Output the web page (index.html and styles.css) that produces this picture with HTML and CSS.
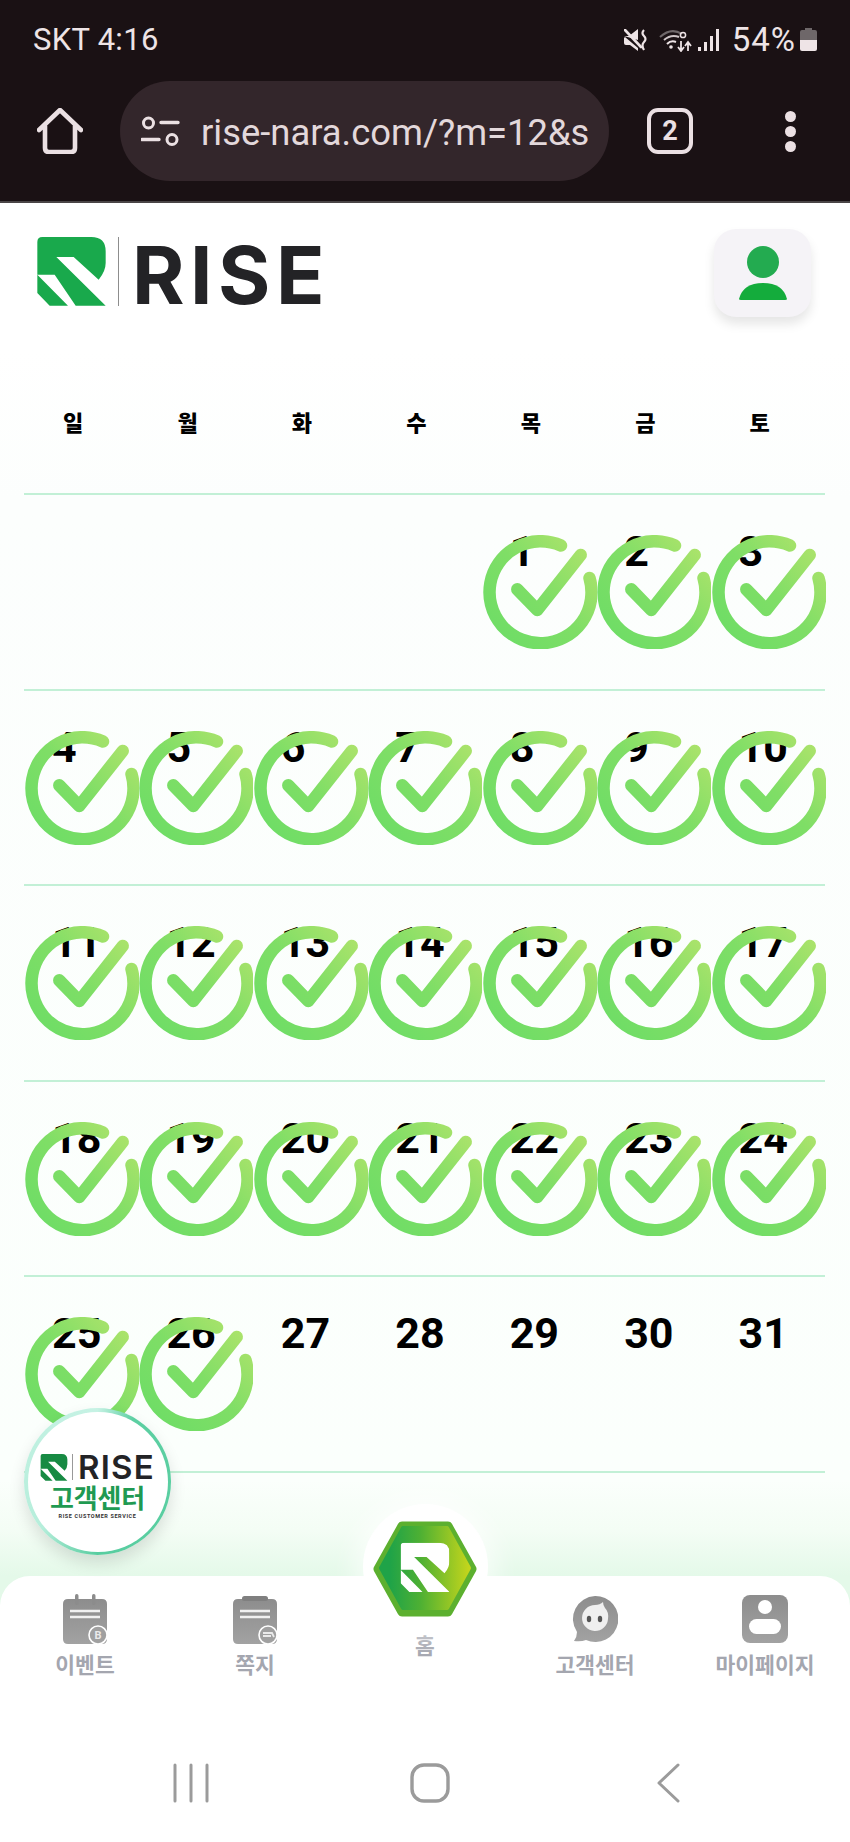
FILE: index.html
```html
<!DOCTYPE html>
<html lang="ko">
<head>
<meta charset="utf-8">
<title>RISE</title>
<link rel="stylesheet" href="styles.css">
</head>
<body>
<svg class="defs" width="0" height="0" aria-hidden="true">
  <defs>
    <linearGradient id="ringGrad" gradientUnits="userSpaceOnUse" x1="15" y1="100" x2="105" y2="15">
      <stop offset="0" stop-color="#6fdd66"/>
      <stop offset="0.5" stop-color="#7fde66"/>
      <stop offset="1" stop-color="#ace36b"/>
    </linearGradient>
    <linearGradient id="hexGrad" x1="0" y1="0" x2="1" y2="0">
      <stop offset="0.1" stop-color="#1fa348"/>
      <stop offset="0.45" stop-color="#4eb033"/>
      <stop offset="1" stop-color="#c3d51c"/>
    </linearGradient>
    <linearGradient id="grayGrad" x1="0" y1="0" x2="0" y2="1">
      <stop offset="0" stop-color="#8d8d8d"/>
      <stop offset="1" stop-color="#a2a2a2"/>
    </linearGradient>
    <symbol id="check" viewBox="0 0 114 114">
      <path d="M78 10.5 A51 51 0 1 0 106.5 43" fill="none" stroke="url(#ringGrad)" stroke-width="12.5" stroke-linecap="round"/>
      <path d="M34.3 54.3 L54.3 75 L97.7 20" fill="none" stroke="url(#ringGrad)" stroke-width="12.5" stroke-linecap="round" stroke-linejoin="round"/>
    </symbol>
    <symbol id="mark" viewBox="113 712 205 207">
      <path d="M113 727 Q113 712 128 712 H275 Q318 712 318 755 V790 Q318 815 297 840 L222 772 H170 L318 918 H228 L165 825 H113 Z M113 825 L205 918 H150 L113 880 Z"/>
    </symbol>
  </defs>
</svg>

<header class="chrome">
  <div class="status">
    <span class="status-time">SKT 4:16</span>
    <div class="status-right">
      <svg class="ic-mute" viewBox="0 0 25 22"><path d="M0 7 H5 L14 0 V11 Z M1 8 L14 19 V22 L6 16 H2 Q0 16 0 14 V9 Z" fill="#eee4e6"/><path d="M1 1 L17 18" stroke="#eee4e6" stroke-width="2.6" stroke-linecap="round"/><path d="M20 1 Q17 4 20 7 Q23 10 20 13 Q17 16 20 21" fill="none" stroke="#eee4e6" stroke-width="2.2"/></svg>
      <svg class="ic-wifi" viewBox="0 0 33 24"><path d="M1 9 Q12 -1 23 6" fill="none" stroke="#6f686a" stroke-width="2"/><path d="M5 12 Q12 6 20 9" fill="none" stroke="#cfc6c8" stroke-width="2"/><path d="M8 16 Q12 12 17 14" fill="none" stroke="#eee4e6" stroke-width="2"/><circle cx="12" cy="19" r="1.8" fill="#eee4e6"/><circle cx="24" cy="7" r="2.6" fill="none" stroke="#eee4e6" stroke-width="1.5"/><path d="M22 13 V22 M19 19 L22 23 L25 19 M29 23 V15 M26 18 L29 14 L32 18" fill="none" stroke="#eee4e6" stroke-width="1.8"/></svg>
      <svg class="ic-signal" viewBox="0 0 22 24"><rect x="0" y="19" width="3" height="4" fill="#eee4e6"/><rect x="6" y="14" width="3" height="9" fill="#eee4e6"/><rect x="12" y="8" width="3" height="15" fill="#eee4e6"/><rect x="18" y="1" width="3" height="22" fill="#eee4e6"/></svg>
      <span class="status-batt">54%</span>
      <svg class="ic-batt" viewBox="0 0 17 24"><path d="M5 0 H12 V2 H15 Q17 2 17 4 V12 H0 V4 Q0 2 2 2 H5 Z" fill="#6e6769"/><path d="M0 12 H17 V21 Q17 23 15 23 H2 Q0 23 0 21 Z" fill="#eee4e6"/></svg>
    </div>
  </div>
  <div class="toolbar">
    <svg class="ic-home" viewBox="0 0 46 46"><path d="M2 22 L23 2 L44 22 M8 18 V40 Q8 44 12 44 H34 Q38 44 38 40 V18" fill="none" stroke="#ebe0e3" stroke-width="4.6" stroke-linecap="round" stroke-linejoin="round"/></svg>
    <div class="urlbar">
      <svg class="ic-tune" viewBox="0 0 39 30"><circle cx="7.5" cy="7" r="5" fill="none" stroke="#ebe0e3" stroke-width="3"/><path d="M20 6.5 H37 M1 23.5 H18" stroke="#ebe0e3" stroke-width="3.4" stroke-linecap="round"/><circle cx="31" cy="23.5" r="5" fill="none" stroke="#ebe0e3" stroke-width="3"/></svg>
      <span class="url">rise-nara.com/?m=12&amp;s</span>
    </div>
    <div class="tabs">2</div>
    <div class="dots"><i></i><i></i><i></i></div>
  </div>
</header>

<main class="page">
  <div class="site-head">
    <div class="logo">
      <svg class="logo-mark"><use href="#mark"/></svg>
      <span class="logo-div"></span>
      <span class="logo-word">RISE</span>
    </div>
    <div class="avatar">
      <svg viewBox="0 0 48 54"><circle cx="24" cy="16" r="16" fill="#23ab50"/><path d="M0 53 Q4 37 24 37 Q44 37 48 53 Q48 54 46 54 H2 Q0 54 0 53 Z" fill="#14ac3c"/></svg>
    </div>
  </div>

  <section class="calendar">
    <div class="days">
      <span>일</span><span>월</span><span>화</span><span>수</span><span>목</span><span>금</span><span>토</span>
    </div>
    <div class="week">
      <div class="cell"></div><div class="cell"></div><div class="cell"></div><div class="cell"></div>
      <div class="cell">1<svg class="check"><use href="#check"/></svg></div>
      <div class="cell">2<svg class="check"><use href="#check"/></svg></div>
      <div class="cell">3<svg class="check"><use href="#check"/></svg></div>
    </div>
    <div class="week">
      <div class="cell">4<svg class="check"><use href="#check"/></svg></div>
      <div class="cell">5<svg class="check"><use href="#check"/></svg></div>
      <div class="cell">6<svg class="check"><use href="#check"/></svg></div>
      <div class="cell">7<svg class="check"><use href="#check"/></svg></div>
      <div class="cell">8<svg class="check"><use href="#check"/></svg></div>
      <div class="cell">9<svg class="check"><use href="#check"/></svg></div>
      <div class="cell">10<svg class="check"><use href="#check"/></svg></div>
    </div>
    <div class="week">
      <div class="cell">11<svg class="check"><use href="#check"/></svg></div>
      <div class="cell">12<svg class="check"><use href="#check"/></svg></div>
      <div class="cell">13<svg class="check"><use href="#check"/></svg></div>
      <div class="cell">14<svg class="check"><use href="#check"/></svg></div>
      <div class="cell">15<svg class="check"><use href="#check"/></svg></div>
      <div class="cell">16<svg class="check"><use href="#check"/></svg></div>
      <div class="cell">17<svg class="check"><use href="#check"/></svg></div>
    </div>
    <div class="week">
      <div class="cell">18<svg class="check"><use href="#check"/></svg></div>
      <div class="cell">19<svg class="check"><use href="#check"/></svg></div>
      <div class="cell">20<svg class="check"><use href="#check"/></svg></div>
      <div class="cell">21<svg class="check"><use href="#check"/></svg></div>
      <div class="cell">22<svg class="check"><use href="#check"/></svg></div>
      <div class="cell">23<svg class="check"><use href="#check"/></svg></div>
      <div class="cell">24<svg class="check"><use href="#check"/></svg></div>
    </div>
    <div class="week">
      <div class="cell">25<svg class="check"><use href="#check"/></svg></div>
      <div class="cell">26<svg class="check"><use href="#check"/></svg></div>
      <div class="cell">27</div>
      <div class="cell">28</div>
      <div class="cell">29</div>
      <div class="cell">30</div>
      <div class="cell">31</div>
    </div>
  </section>

  <div class="badge">
    <div class="badge-inner">
      <div class="badge-logo">
        <svg class="badge-mark"><use href="#mark"/></svg>
        <span class="badge-div"></span>
        <span class="badge-word">RISE</span>
      </div>
      <div class="badge-title">고객센터</div>
      <div class="badge-sub">RISE CUSTOMER SERVICE</div>
    </div>
  </div>
</main>

<footer class="bottom">
  <nav class="tabbar">
    <a class="tab">
      <svg class="tab-ic" viewBox="0 0 46 50"><path d="M6 5 H40 Q45 5 45 10 V45 Q45 50 40 50 H6 Q1 50 1 45 V10 Q1 5 6 5 Z" fill="url(#grayGrad)"/><rect x="13" y="0" width="3.5" height="11" rx="1.7" fill="#8c8c8c"/><rect x="30" y="0" width="3.5" height="11" rx="1.7" fill="#8c8c8c"/><path d="M8 17 H38 M8 23 H38" stroke="#f1f1f1" stroke-width="2.6"/><circle cx="36" cy="41" r="9" fill="#a0a0a0" stroke="#fff" stroke-width="1.6"/><text x="36" y="45" class="tab-ic-b">B</text></svg>
      <span class="tab-label">이벤트</span>
    </a>
    <a class="tab">
      <svg class="tab-ic" viewBox="0 0 46 50"><path d="M6 5 H40 Q45 5 45 10 V45 Q45 50 40 50 H6 Q1 50 1 45 V10 Q1 5 6 5 Z" fill="url(#grayGrad)"/><rect x="10" y="2" width="26" height="5" rx="2.5" fill="#7f7f7f"/><path d="M8 17 H38 M8 23 H38" stroke="#f1f1f1" stroke-width="2.6"/><circle cx="36" cy="41" r="9" fill="#a0a0a0" stroke="#fff" stroke-width="1.6"/><path d="M31 39 H40 L42 43 M31 42 H39" fill="none" stroke="#eaeaea" stroke-width="1.8"/></svg>
      <span class="tab-label">쪽지</span>
    </a>
    <a class="tab tab-home">
      <div class="disc">
        <svg class="hex" viewBox="0 0 104 96">
          <path d="M29 5 H75 L99 48 L75 91 H29 L5 48 Z" fill="#5cb02f" stroke="#5cb02f" stroke-width="9" stroke-linejoin="round"/>
          <path d="M30 7 H74 L96 47 L74 87 H30 L8 47 Z" fill="url(#hexGrad)" stroke="url(#hexGrad)" stroke-width="4" stroke-linejoin="round"/>
          <svg x="27.5" y="21.5" width="49" height="50" class="hex-mark"><use href="#mark"/></svg>
        </svg>
      </div>
      <span class="tab-label">홈</span>
    </a>
    <a class="tab">
      <svg class="tab-ic" viewBox="0 0 46 50"><path d="M23 2 A23 23 0 1 1 14 46 Q9 48 2 47 Q5 43 5 38 A23 23 0 0 1 23 2 Z" fill="url(#grayGrad)"/><path d="M23 11 Q28 11 31 8 Q31 11 33 14 Q37 18 36 25 A13 13 0 1 1 23 11 Z" fill="#efefef"/><ellipse cx="17" cy="25" rx="2.2" ry="3.2" fill="#555"/><ellipse cx="28" cy="25" rx="2.2" ry="3.2" fill="#555"/></svg>
      <span class="tab-label">고객센터</span>
    </a>
    <a class="tab">
      <svg class="tab-ic" viewBox="0 0 46 50"><rect x="0" y="1" width="46" height="48" rx="8" fill="url(#grayGrad)"/><circle cx="23" cy="13" r="7" fill="#fff"/><rect x="7" y="25" width="32" height="15" rx="7.5" fill="#fff"/></svg>
      <span class="tab-label">마이페이지</span>
    </a>
  </nav>
  <div class="sysbar">
    <svg class="sys-lines" viewBox="0 0 36 40"><path d="M2 2 V38 M18 2 V38 M34 2 V38" stroke="#9b9b9b" stroke-width="3" stroke-linecap="round"/></svg>
    <svg class="sys-square" viewBox="0 0 40 40"><rect x="2" y="2" width="36" height="36" rx="12" fill="none" stroke="#9b9b9b" stroke-width="3.4"/></svg>
    <svg class="sys-back" viewBox="0 0 24 40"><path d="M22 2 L3 20 L22 38" fill="none" stroke="#9b9b9b" stroke-width="3" stroke-linecap="round" stroke-linejoin="round"/></svg>
  </div>
</footer>
</body>
</html>
```

FILE: styles.css
```css
* { box-sizing: border-box; }

html, body { margin: 0; padding: 0; }

body {
  width: 850px;
  height: 1842px;
  overflow: hidden;
  display: flex;
  flex-direction: column;
  position: relative;
  font-family: Roboto, "Noto Sans CJK KR", sans-serif;
  background: linear-gradient(180deg, #ffffff 0, #ffffff 350px, #fcfefd 500px, #fbfffc 1480px, #f4fdf5 1530px, #e4f9e9 1576px, #e4f9e9 1842px);
}

.defs { position: absolute; }

/* browser chrome */
.chrome {
  height: 203px;
  flex: none;
  background: #1a1114;
  border-bottom: 2px solid #4a4547;
  color: #ebe0e3;
}

.status {
  height: 79px;
  padding: 21px 33px 0 33px;
  display: flex;
  justify-content: space-between;
  align-items: flex-start;
}

.status-time {
  font-size: 31px;
  line-height: 38px;
  letter-spacing: 0.3px;
  color: #eee4e6;
}

.status-batt {
  font-size: 33px;
  line-height: 38px;
  letter-spacing: 1px;
  color: #eee4e6;
}

.status-right {
  display: flex;
  align-items: center;
  height: 38px;
}

.ic-mute { width: 25px; height: 22px; margin-right: 10px; }
.ic-wifi { width: 33px; height: 24px; margin-right: 6px; }
.ic-signal { width: 22px; height: 24px; margin-right: 12px; }
.ic-batt { width: 17px; height: 24px; margin-left: 4px; }

.toolbar {
  display: flex;
  align-items: center;
  height: 104px;
  padding-left: 37px;
}

.ic-home { width: 46px; height: 46px; flex: none; }

.urlbar {
  width: 489px;
  height: 100px;
  margin-left: 37px;
  border-radius: 50px;
  background: #33262b;
  display: flex;
  align-items: center;
  padding-left: 21px;
  flex: none;
}

.ic-tune { width: 39px; height: 30px; flex: none; }

.url {
  margin-left: 21px;
  padding-top: 3px;
  font-size: 36.4px;
  color: #e3d8db;
  white-space: nowrap;
}

.tabs {
  width: 46px;
  height: 46px;
  margin-left: 38px;
  border: 4.5px solid #ebe0e3;
  border-radius: 11px;
  display: flex;
  align-items: center;
  justify-content: center;
  font-size: 27px;
  font-weight: 700;
  flex: none;
}

.dots {
  margin-left: 92px;
  display: flex;
  flex-direction: column;
  gap: 4px;
}

.dots i {
  display: block;
  width: 11px;
  height: 11px;
  border-radius: 50%;
  background: #ebe0e3;
}

/* page */
.page {
  flex: 1;
  position: relative;
  min-height: 0;
}

.site-head {
  height: 148px;
  padding: 26px 39px 0 37px;
  display: flex;
  justify-content: space-between;
  align-items: flex-start;
}

.logo {
  display: flex;
  align-items: center;
  margin-top: 8px;
  height: 69px;
}

.logo-mark {
  width: 69px;
  height: 69px;
  fill: #19a94c;
}

.logo-div {
  width: 1px;
  height: 69px;
  margin-left: 12px;
  background: #8d8d8d;
}

.logo-word {
  margin-left: 13px;
  padding-top: 6px;
  font-family: Inter, sans-serif;
  font-size: 80px;
  line-height: 69px;
  font-weight: 700;
  letter-spacing: 5.5px;
  color: #232326;
}

.avatar {
  width: 97px;
  height: 88px;
  border-radius: 22px;
  background: #f5f3f7;
  box-shadow: 0 7px 11px rgba(0, 0, 0, 0.1);
  display: flex;
  align-items: center;
  justify-content: center;
}

.avatar svg { width: 48px; height: 54px; }

/* calendar */
.calendar {
  margin: 0 25px 0 24px;
}

.days {
  display: grid;
  grid-template-columns: repeat(7, 1fr);
  height: 144px;
  padding-bottom: 2px;
  border-bottom: 2px solid #c2f0d6;
  align-items: center;
}

.days span {
  padding-left: 39px;
  font-family: "Noto Sans CJK KR", sans-serif;
  font-size: 22px;
  font-weight: 900;
  color: #000;
}

.week {
  display: grid;
  grid-template-columns: repeat(7, 1fr);
  height: 195.6px;
  border-bottom: 2px solid #c2f0d6;
}

.cell {
  position: relative;
  padding: 35px 0 0 28px;
  font-size: 43px;
  line-height: 43px;
  font-weight: 700;
  color: #000;
}

.check {
  position: absolute;
  left: 1px;
  top: 40px;
  width: 114px;
  height: 114px;
  overflow: visible;
}

/* floating badge */
.badge {
  position: absolute;
  left: 24px;
  top: 1205px;
  width: 147px;
  height: 147px;
  padding: 3.5px;
  border-radius: 50%;
  background: conic-gradient(from 30deg, #5ccfa2 0deg, #58cda0 150deg, #b6eedb 200deg, #c6f2e4 330deg, #5ccfa2 360deg);
  box-shadow: 0 8px 16px rgba(0, 0, 0, 0.12);
}

.badge-inner {
  width: 100%;
  height: 100%;
  border-radius: 50%;
  background: #fff;
  display: flex;
  flex-direction: column;
  align-items: center;
  padding-top: 42px;
}

.badge-logo {
  display: flex;
  align-items: center;
  height: 27px;
}

.badge-mark {
  width: 28px;
  height: 27px;
  fill: #178a43;
}

.badge-div {
  width: 1px;
  height: 26px;
  margin-left: 4px;
  background: #999;
}

.badge-word {
  margin-left: 5px;
  font-family: Inter, sans-serif;
  font-size: 33px;
  line-height: 27px;
  font-weight: 600;
  letter-spacing: 1.2px;
  color: #232326;
}

.badge-title {
  margin-top: 1px;
  font-family: "Noto Sans CJK KR", sans-serif;
  font-size: 26px;
  line-height: 30px;
  font-weight: 700;
  color: #1f9a52;
  letter-spacing: -0.2px;
}

.badge-sub {
  font-size: 5.5px;
  line-height: 8px;
  font-weight: 700;
  letter-spacing: 0.6px;
  color: #333;
  white-space: nowrap;
}

/* bottom nav */
.bottom {
  flex: none;
  height: 266px;
  background: #fff;
  border-radius: 30px 30px 0 0;
  display: flex;
  flex-direction: column;
}

.tabbar {
  display: grid;
  grid-template-columns: repeat(5, 1fr);
  height: 187px;
}

.tab {
  position: relative;
  display: flex;
  flex-direction: column;
  align-items: center;
  padding-top: 18px;
}

.tab-ic {
  width: 46px;
  height: 50px;
}

.tab-ic-b {
  font-size: 11px;
  font-weight: 700;
  text-anchor: middle;
  fill: #eaeaea;
}

.tab-label {
  margin-top: 8px;
  font-family: "Noto Sans CJK KR", sans-serif;
  font-size: 21.5px;
  line-height: 24px;
  font-weight: 700;
  color: #a4a6af;
  white-space: nowrap;
}

.tab-home { padding-top: 57px; }
.tab-home .tab-label { margin-top: 0; }

.disc {
  position: absolute;
  left: 22.5px;
  top: -72px;
  width: 125px;
  height: 125px;
  border-radius: 50%;
  background: #fff;
  box-shadow: 0 0 26px 8px rgba(255, 255, 255, 0.65);
  display: flex;
  align-items: center;
  justify-content: center;
  padding-top: 5px;
}

.hex { width: 104px; height: 96px; }
.hex-mark { fill: #fff; }

.sysbar {
  display: flex;
  align-items: center;
  height: 40px;
  padding-left: 173px;
}

.sys-lines { width: 36px; height: 40px; margin-right: 201px; }
.sys-square { width: 40px; height: 40px; margin-right: 206px; }
.sys-back { width: 24px; height: 40px; }
```
